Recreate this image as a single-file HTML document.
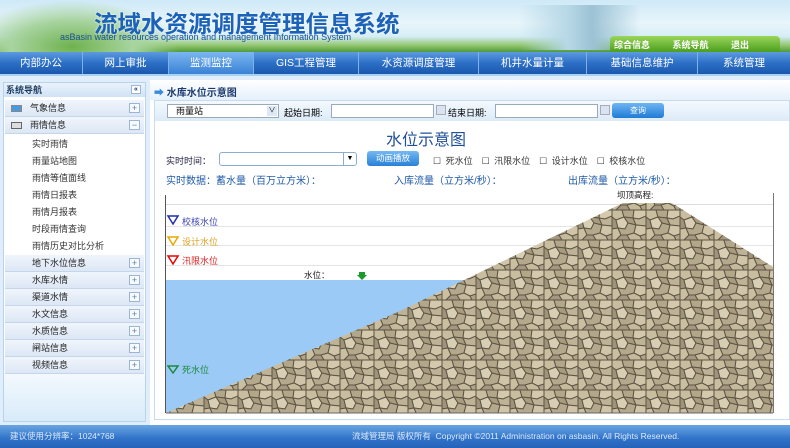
<!DOCTYPE html>
<html><head><meta charset="utf-8"><style>
*{margin:0;padding:0;box-sizing:border-box}
body{width:790px;height:448px;overflow:hidden;font-family:"Liberation Sans","Noto Sans CJK SC",sans-serif;font-size:9px;background:#dfeefa;position:relative}
.abs{position:absolute}
#hdr{left:0;top:0;width:790px;height:52px;background:linear-gradient(180deg,#cfe9f7 0%,#e8f5fb 45%,#d6eef6 70%,#8fc46a 88%,#4f9a3c 100%)}
#nav{left:0;top:52px;width:790px;height:24px;background:linear-gradient(180deg,#5d9be0 0%,#2c6fc6 50%,#1b58ad 100%);border-bottom:2px solid #a9d2f2}
#nav div{position:absolute;top:0;height:22px;line-height:22px;color:#fff;font-size:10.5px;text-align:center;border-right:1px solid #7fb0e8}
#side{left:3px;top:82px;width:143px;height:340px;background:linear-gradient(180deg,#fff 0%,#fff 80%,#d8ebfa 100%);border:1px solid #b9d3ea}
.it{position:absolute;left:1px;width:139px;height:17px;line-height:17px;font-size:9px;color:#222;background:linear-gradient(#f0f5fc,#dce7f5);border-bottom:1px solid #c5d6ea}
.it .p{position:absolute;right:4px;top:3px;width:11px;height:10px;border:1px solid #9bb5d2;background:#f7fbff;color:#5a7fa8;font-size:9px;line-height:8px;text-align:center}
.sub{position:absolute;left:28px;font-size:9px;color:#333;height:17px;line-height:17px}
#main{left:150px;top:80px;width:640px;height:345px;background:#fff}
#foot{left:0;top:425px;width:790px;height:23px;background:linear-gradient(180deg,#6aa5e2,#2f72c8 60%,#2563b8);color:#dbe9fa;font-size:8.5px;line-height:23px}
.cal{position:absolute;top:1px;width:10px;height:10px;background:#d9e4f0;border:1px solid #aab}
</style></head><body>
<div id="hdr" class="abs">
 <div class="abs" style="left:0;top:0;width:180px;height:52px;background:radial-gradient(ellipse at 40% 90%,#6fb24e 0%,#a8d4a0 40%,rgba(200,230,240,0) 70%)"></div>
 <div class="abs" style="left:520px;top:5px;width:120px;height:45px;background:linear-gradient(90deg,rgba(255,255,255,0),#b7d8e6 40%,#9cc2d4 60%,rgba(255,255,255,0))"></div>
 <div class="abs" style="left:94px;top:5px;font-size:23.5px;font-weight:bold;color:#1b62b8;text-shadow:0 0 2px #fff;white-space:nowrap">流域水资源调度管理信息系统</div>
 <div class="abs" style="left:60px;top:32px;font-size:9px;color:#1a4f99;white-space:nowrap">asBasin water resources operation and management Information System</div>
 <div class="abs" style="left:610px;top:36px;width:170px;height:16px;background:linear-gradient(#9ad65a,#4c9e1e);border-radius:4px 4px 0 0"></div>
 <div class="abs" style="left:614px;top:38px;font-size:9px;color:#fff;font-weight:bold;word-spacing:20px">综合信息 系统导航 退出</div>
</div>
<div id="nav" class="abs">
 <div style="left:0;width:83px">内部办公</div>
 <div style="left:83px;width:86px">网上审批</div>
 <div style="left:169px;width:85px;background:linear-gradient(#7ab6ef,#3b82d6)">监测监控</div>
 <div style="left:254px;width:105px">GIS工程管理</div>
 <div style="left:359px;width:120px">水资源调度管理</div>
 <div style="left:479px;width:108px">机井水量计量</div>
 <div style="left:587px;width:111px">基础信息维护</div>
 <div style="left:698px;width:92px;border:none">系统管理</div>
</div>
<div id="side" class="abs">
 <div class="abs" style="left:0;top:0;width:141px;height:14px;line-height:14px;background:linear-gradient(#eaf3fc,#cfe2f5);font-weight:bold;font-size:9px;padding-left:2px;color:#1d3a5c">系统导航<span style="position:absolute;right:4px;top:2px;width:10px;height:9px;border:1px solid #9bb5d2;font-size:7px;line-height:7px;text-align:center;background:#fff">«</span></div>
 <div class="it" style="top:17px"><span style="position:absolute;left:6px;top:5px;width:11px;height:7px;background:#4a9ae0;border:1px solid #888"></span><span style="margin-left:25px">气象信息</span><span class="p">+</span></div>
 <div class="it" style="top:34px"><span style="position:absolute;left:6px;top:5px;width:11px;height:7px;background:#ddd;border:1px solid #666"></span><span style="margin-left:25px">雨情信息</span><span class="p">−</span></div>
 <div class="sub" style="top:53px">实时雨情</div>
 <div class="sub" style="top:70px">雨量站地图</div>
 <div class="sub" style="top:87px">雨情等值面线</div>
 <div class="sub" style="top:104px">雨情日报表</div>
 <div class="sub" style="top:121px">雨情月报表</div>
 <div class="sub" style="top:138px">时段雨情查询</div>
 <div class="sub" style="top:155px">雨情历史对比分析</div>
 <div class="it" style="top:172px"><span style="margin-left:27px">地下水位信息</span><span class="p">+</span></div>
 <div class="it" style="top:189px"><span style="margin-left:27px">水库水情</span><span class="p">+</span></div>
 <div class="it" style="top:206px"><span style="margin-left:27px">渠道水情</span><span class="p">+</span></div>
 <div class="it" style="top:223px"><span style="margin-left:27px">水文信息</span><span class="p">+</span></div>
 <div class="it" style="top:240px"><span style="margin-left:27px">水质信息</span><span class="p">+</span></div>
 <div class="it" style="top:257px"><span style="margin-left:27px">闸站信息</span><span class="p">+</span></div>
 <div class="it" style="top:274px"><span style="margin-left:27px">视频信息</span><span class="p">+</span></div>
</div>
<div id="main" class="abs">
 <div class="abs" style="left:0;top:0;width:640px;height:20px;background:linear-gradient(#fff,#e4f0fb)"></div>
 <div class="abs" style="left:4px;top:4px;font-size:10px;font-weight:bold;color:#1d3a6c"><span style="color:#3a8ad8">➡</span> 水库水位示意图</div>
 <div class="abs" style="left:4px;top:20px;width:636px;height:320px;border:1px solid #c6dcef;background:#fff"></div>
 <div class="abs" style="left:5px;top:21px;width:634px;height:20px;background:linear-gradient(#f4f9fe,#dcebf8)"></div>
 <div class="abs" style="left:17px;top:24px;width:112px;height:14px;border:1px solid #9ab;background:#fff;font-size:9px;line-height:12px;padding-left:8px">雨量站<span style="position:absolute;right:1px;top:1px;width:10px;height:10px;background:#dce8f6;font-size:7px;text-align:center;line-height:10px">∨</span></div>
 <div class="abs" style="left:134px;top:26px;font-size:9px">起始日期:</div>
 <div class="abs" style="left:181px;top:24px;width:103px;height:14px;border:1px solid #9ab;background:#fff"></div>
 <div class="cal" style="left:286px;top:25px"></div>
 <div class="abs" style="left:298px;top:26px;font-size:9px">结束日期:</div>
 <div class="abs" style="left:345px;top:24px;width:103px;height:14px;border:1px solid #9ab;background:#fff"></div>
 <div class="cal" style="left:450px;top:25px"></div>
 <div class="abs" style="left:462px;top:23px;width:52px;height:15px;border-radius:3px;background:linear-gradient(#6fb6f2,#1f7bd6);color:#fff;text-align:center;line-height:15px;font-size:8px">查询</div>
 <div class="abs" style="left:236px;top:46px;font-size:16px;color:#1f4f99">水位示意图</div>
 <div class="abs" style="left:16px;top:74px;font-size:9px;color:#224">实时时间：</div>
 <div class="abs" style="left:69px;top:72px;width:138px;height:14px;border:1px solid #8aaed2;border-radius:3px;background:#fff"><span style="position:absolute;right:0;top:0;width:13px;height:12px;border-left:1px solid #8aaed2;font-size:7px;text-align:center;line-height:12px">▼</span></div>
 <div class="abs" style="left:217px;top:71px;width:52px;height:15px;border-radius:3px;background:linear-gradient(#74b9f2,#2a80d8);color:#fff;font-size:8.5px;text-align:center;line-height:15px">动画播放</div>
 <div class="abs" style="left:283px;top:74px;font-size:9px;color:#333;word-spacing:2px">☐ 死水位 &nbsp;☐ 汛限水位 &nbsp;☐ 设计水位 &nbsp;☐ 校核水位</div>
 <div class="abs" style="left:16px;top:92px;font-size:10px;color:#1f5aa8">实时数据：蓄水量（百万立方米）：</div>
 <div class="abs" style="left:244px;top:92px;font-size:10px;color:#1f5aa8">入库流量（立方米/秒）：</div>
 <div class="abs" style="left:418px;top:92px;font-size:10px;color:#1f5aa8">出库流量（立方米/秒）：</div>
 <div class="abs" style="left:467px;top:109px;font-size:8.5px;color:#222">坝顶高程:</div>
</div>
<svg class="abs" style="left:0;top:0" width="790" height="448">
 <defs>
  <pattern id="st" width="34" height="30" patternUnits="userSpaceOnUse">
   <rect width="34" height="30" fill="#a99c80"/>
   <g stroke="#5d5544" stroke-width="1">
    <polygon points="0,0 10,0 12,7 4,10 0,7" fill="#c9bd9f"/>
    <polygon points="10,0 22,0 21,8 12,7" fill="#b3a78a"/>
    <polygon points="22,0 34,0 34,6 27,9 21,8" fill="#d4c9ad"/>
    <polygon points="0,7 4,10 6,18 0,19" fill="#9f937a"/>
    <polygon points="4,10 12,7 16,13 13,19 6,18" fill="#d8ceb4"/>
    <polygon points="12,7 21,8 24,15 16,13" fill="#a89b7e"/>
    <polygon points="21,8 27,9 34,6 34,16 24,15" fill="#bfb397"/>
    <polygon points="0,19 6,18 9,25 4,30 0,30" fill="#cbbfa2"/>
    <polygon points="6,18 13,19 16,13 24,15 22,23 15,25 9,25" fill="#b5a98d"/>
    <polygon points="24,15 34,16 34,24 28,26 22,23" fill="#d0c5a9"/>
    <polygon points="9,25 15,25 18,30 4,30" fill="#a49880"/>
    <polygon points="15,25 22,23 28,26 30,30 18,30" fill="#c6ba9c"/>
    <polygon points="28,26 34,24 34,30 30,30" fill="#b0a488"/>
   </g>
  </pattern>
 </defs>
 <line x1="165.5" y1="195" x2="165.5" y2="413" stroke="#555"/>
 <line x1="773.5" y1="193" x2="773.5" y2="413" stroke="#777"/>
 <line x1="166" y1="204.5" x2="773" y2="204.5" stroke="#ddd"/>
 <line x1="166" y1="226.5" x2="773" y2="226.5" stroke="#e4e4e4"/>
 <line x1="166" y1="245.5" x2="773" y2="245.5" stroke="#e4e4e4"/>
 <line x1="166" y1="265.5" x2="773" y2="265.5" stroke="#e4e4e4"/>
 <rect x="166" y="280" width="607" height="133" fill="#9ccaf6"/>
 <polygon points="166,413 400,311 623,203 672,203 773,267 773,413" fill="url(#st)"/>
 <line x1="166" y1="413" x2="773" y2="413" stroke="#666"/>
 <polygon points="168,216 178,216 173,224" fill="none" stroke="#1f2fb0" stroke-width="1.5"/>
 <polygon points="168,237 178,237 173,245" fill="none" stroke="#e8a800" stroke-width="1.5"/>
 <polygon points="168,256 178,256 173,264" fill="none" stroke="#e00" stroke-width="1.5"/>
 <polygon points="168,366 178,366 173,373" fill="none" stroke="#1a8a3a" stroke-width="1.5"/>
 <text x="182" y="225" font-size="9" fill="#3f46b0" font-family="Liberation Sans,Noto Sans CJK SC,sans-serif">校核水位</text>
 <text x="182" y="245" font-size="9" fill="#e0a020" font-family="Liberation Sans,Noto Sans CJK SC,sans-serif">设计水位</text>
 <text x="182" y="264" font-size="9" fill="#e02020" font-family="Liberation Sans,Noto Sans CJK SC,sans-serif">汛限水位</text>
 <text x="182" y="373" font-size="9" fill="#1a8a3a" font-family="Liberation Sans,Noto Sans CJK SC,sans-serif">死水位</text>
 <text x="304" y="278" font-size="8.5" fill="#222" font-family="Liberation Sans,Noto Sans CJK SC,sans-serif">水位：</text>
 <polygon points="359,272 365,272 365,275 367,275 362,280 357,275 359,275" fill="#1a9a2a"/>
</svg>
<div id="foot" class="abs"><span style="position:absolute;left:10px">建议使用分辨率：1024*768</span><span style="position:absolute;left:352px">流域管理局 版权所有 &nbsp;Copyright ©2011 Administration on asbasin. All Rights Reserved.</span></div>
</body></html>
